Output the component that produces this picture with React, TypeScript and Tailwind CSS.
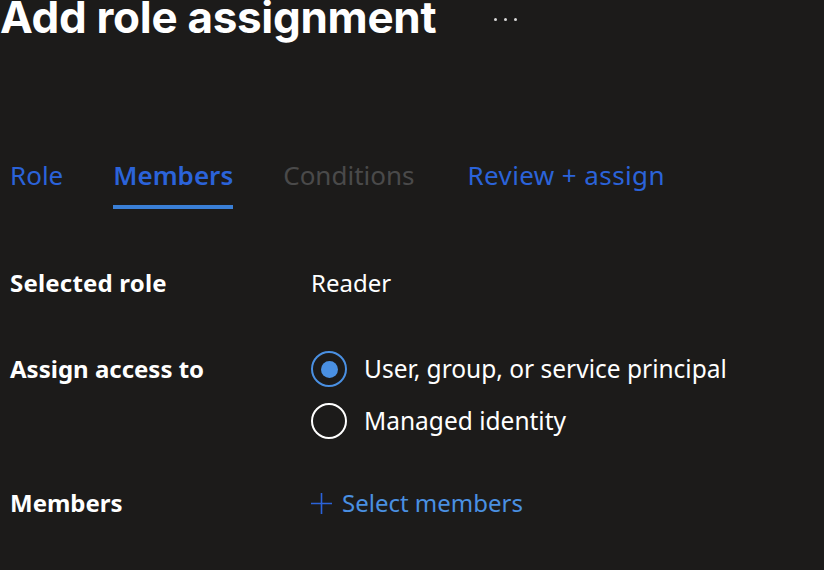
import React from 'react';

const tabs = [
  { label: 'Role', cls: 'text-[#2b63d9]' },
  { label: 'Members', cls: 'text-[#2b63d9] font-semibold', active: true },
  { label: 'Conditions', cls: 'text-[#4a4a4a]' },
  { label: 'Review + assign', cls: 'text-[#2b63d9] tracking-[0.4px] ml-[3px]' },
];

const App: React.FC = () => {
  return (
    <div className="w-[824px] h-[570px] overflow-hidden bg-[#1c1b1a] text-white font-['Noto_Sans',sans-serif]">
      <div className="flex items-center -mt-[12px] h-[58px]">
        <h1 className="font-['Inter',sans-serif] font-bold text-[44px] tracking-[-0.3px] leading-none">Add role assignment</h1>
        <span className="ml-[58px] flex gap-[7px] mt-[4px]">
          <span className="w-[3px] h-[3px] rounded-full bg-[#d8d8d8]"></span>
          <span className="w-[3px] h-[3px] rounded-full bg-[#d8d8d8]"></span>
          <span className="w-[3px] h-[3px] rounded-full bg-[#d8d8d8]"></span>
        </span>
      </div>

      <div className="flex pl-[10px] mt-[111px] gap-[50px]">
        {tabs.map((t) => (
          <div key={t.label} className="flex flex-col">
            <span className={`text-[26px] leading-[36px] ${t.cls}`}>{t.label}</span>
            <span className={`mt-[12px] h-[4px] ${t.active ? 'bg-[#3a7fd6]' : 'bg-transparent'}`}></span>
          </div>
        ))}
      </div>

      <div className="pl-[10px] mt-[58px] flex flex-col">
        <div className="flex items-center h-[32px]">
          <span className="w-[301px] text-[24px] font-bold tracking-[0.2px]">Selected role</span>
          <span className="text-[24px]">Reader</span>
        </div>

        <div className="flex mt-[52px]">
          <span className="w-[301px] text-[24px] font-bold leading-[32px] mt-[2px]">Assign access to</span>
          <div className="flex flex-col gap-[16px]">
            <label className="flex items-center gap-[17px] h-[36px]">
              <span className="w-[36px] h-[36px] rounded-full border-2 border-[#4a90e2] flex items-center justify-center">
                <span className="w-[17px] h-[17px] rounded-full bg-[#4a90e2]"></span>
              </span>
              <span className="text-[24.5px]">User, group, or service principal</span>
            </label>
            <label className="flex items-center gap-[17px] h-[36px]">
              <span className="w-[36px] h-[36px] rounded-full border-2 border-white"></span>
              <span className="text-[24.5px]">Managed identity</span>
            </label>
          </div>
        </div>

        <div className="flex items-center mt-[48px] h-[32px]">
          <span className="w-[301px] text-[24px] font-bold">Members</span>
          <span className="flex items-center gap-[10px] text-[#4a90e2]">
            <svg width="21" height="21" viewBox="0 0 21 21" fill="none" stroke="#2b63d9" strokeWidth="1.6">
              <path d="M10.5 0v21M0 10.5h21" />
            </svg>
            <span className="text-[24px]">Select members</span>
          </span>
        </div>
      </div>
    </div>
  );
};

export default App;
